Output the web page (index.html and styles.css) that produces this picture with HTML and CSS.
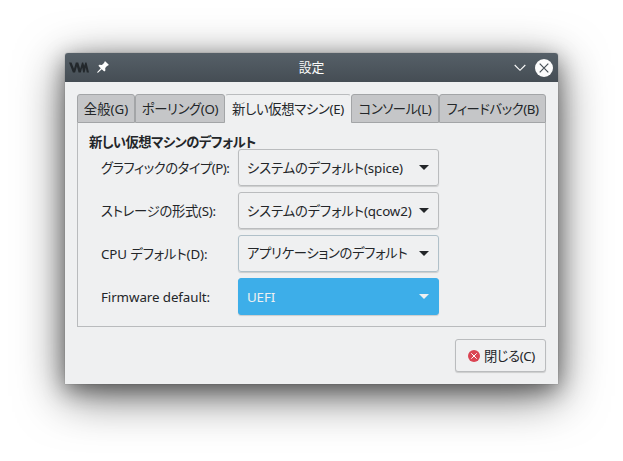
FILE: index.html
```html
<!DOCTYPE html>
<html lang="ja">
<head>
<meta charset="utf-8">
<title>設定</title>
<link rel="stylesheet" href="styles.css">
</head>
<body>
<main class="window">
  <header class="titlebar">
    <svg class="logo" width="20" height="11" viewBox="0 0 20 11"><path d="M0 .5h2.500L5 6.800 6.800.5h2.400l2 6.300L13 .5h1.200l1 3.300L16.300.5h1.200l2.500 10h-2.200L16.800 5.500l-1.200 5h-1.400L13.200 5.500l-1.400 5H9.600L7.900 4.500l-1.800 6H3.900z" fill="#23282c"/></svg>
    <svg class="pin" width="12" height="12" viewBox="0 0 12 12"><path d="M8.200.2 11.800 3.800l-.9 1-.7-.1-2 2.400.2 2.500-1.100 1L4.700 8.200 1 11.700H.3V11L3.800 7.300 1.400 4.800l1-1.100 2.500.2L7.300 1.800l-.1-.7z" fill="#fff"/></svg>
    <h1 class="title">設定</h1>
    <svg class="chevron" width="12" height="8" viewBox="0 0 12 8"><path d="M.7 1 6 6.300 11.300 1" fill="none" stroke="#fcfcfc" stroke-width="1.100"/></svg>
    <svg class="close" width="18" height="18" viewBox="0 0 18 18"><circle cx="9" cy="9" r="9" fill="#fcfcfc"/><path d="m4.700 4.700 8.600 8.600m0-8.600-8.600 8.600" stroke="#475057" stroke-width="1.200"/></svg>
  </header>
  <nav class="tabs">
    <div class="tab tab-general"><span>全般(G)</span></div>
    <div class="tab tab-polling"><span>ポーリング(O)</span></div>
    <div class="tab tab-newvm active"><span>新しい仮想マシン(E)</span></div>
    <div class="tab tab-console"><span>コンソール(L)</span></div>
    <div class="tab tab-feedback"><span>フィードバック(B)</span></div>
  </nav>
  <section class="panel">
    <h2 class="heading">新しい仮想マシンのデフォルト</h2>
    <div class="form">
      <label class="label label-graphics"><span>グラフィックのタイプ(P):</span></label>
      <div class="select"><span>システムのデフォルト(spice)</span><i class="arrow"></i></div>
      <label class="label label-storage"><span>ストレージの形式(S):</span></label>
      <div class="select"><span>システムのデフォルト(qcow2)</span><i class="arrow"></i></div>
      <label class="label label-cpu"><span>CPU デフォルト(D):</span></label>
      <div class="select focus"><span>アプリケーションのデフォルト</span><i class="arrow"></i></div>
      <label class="label label-firmware"><span>Firmware default:</span></label>
      <div class="select highlighted"><span>UEFI</span><i class="arrow"></i></div>
    </div>
  </section>
  <footer class="actions">
    <button class="button">
      <svg width="12" height="12" viewBox="0 0 12 12"><circle cx="6" cy="6" r="6" fill="#da4453"/><path d="m3.300 3.300 5.400 5.400m0-5.400-5.400 5.400" stroke="#fff" stroke-width="1"/></svg>
      <span>閉じる(C)</span>
    </button>
  </footer>
</main>
</body>
</html>
```
FILE: styles.css
```css
* { box-sizing: border-box; }
body {
  margin: 0;
  height: 461px;
  padding: 53px 65px 77px;
  overflow: hidden;
  background: #fff;
  color: #232629;
  font: 13.333px/20px "Noto Sans", "Noto Sans CJK JP", sans-serif;
  font-feature-settings: "palt";
}
.window {
  height: 331px;
  background: #eff0f1;
  border-radius: 3px 3px 0 0;
  box-shadow: 0 0 1px rgba(0,0,0,.5), 0 12px 48px rgba(0,0,0,.58), 0 6px 22px rgba(0,0,0,.4);
}
.titlebar {
  display: flex;
  align-items: center;
  height: 29px;
  padding: 0 5px 0 4px;
  border-radius: 3px 3px 0 0;
  background: linear-gradient(#566068, #454d54);
}
.pin {
  margin-left: 8px;
  margin-right: 1px;
  margin-bottom: 2px;
}
.title {
  flex: 1;
  margin: 0 1px 2px 0;
  color: #fcfcfc;
  font-size: 12.800px;
  font-weight: 400;
  text-align: center;
}
.close { margin-left: 9px; }
.tabs {
  display: flex;
  height: 29px;
  margin: 12px 12px 0;
}
.tab {
  display: flex;
  align-items: center;
  justify-content: center;
  border: 1px solid #a3a5a7;
  border-radius: 3px 3px 0 0;
  background: #c5c6c8;
  letter-spacing: -.45px;
  white-space: nowrap;
}
.tab-general { width: 58px; letter-spacing: 0; }
.tab-polling { width: 90px; letter-spacing: -.35px; }
.tab-newvm { width: 126px; letter-spacing: -.3px; }
.tab-console { width: 88px; }
.tab-feedback { width: 107px; }
.tab.active {
  border-color: #babcbe transparent transparent;
  background: #eff0f1;
}
.panel {
  height: 204px;
  margin: 0 12px;
  padding: 9px 11px 0;
  border: 1px solid #b9bbbd;
  border-top: 0;
}
.heading {
  height: 17px;
  margin: 0;
  font-size: 13.333px;
  font-weight: 700;
  line-height: 20px;
  letter-spacing: -.55px;
  white-space: nowrap;
}
.form {
  display: grid;
  grid-template-columns: 137px 201px;
  grid-auto-rows: 37px;
  row-gap: 6px;
  padding-left: 12px;
}
.label {
  display: flex;
  align-items: center;
  white-space: nowrap;
}
.label-graphics { letter-spacing: -.5px; }
.label-storage { letter-spacing: -.3px; }
.label-cpu { letter-spacing: -.1px; }
.label-firmware { letter-spacing: -.08px; }
.select {
  display: flex;
  align-items: center;
  justify-content: space-between;
  padding: 0 9px 0 8px;
  border: 1px solid #babcbe;
  border-radius: 3px;
  box-shadow: 0 1px 1px rgba(0,0,0,.15);
  letter-spacing: -.12px;
  white-space: nowrap;
}
.select.focus {
  border-color: #b0c0c9;
  letter-spacing: -.3px;
}
.select.focus span { margin-bottom: 2px; }
.select.highlighted {
  border-color: #3daee9;
  background: #3daee9;
  color: #eff0f1;
}
.arrow {
  border: 5px solid transparent;
  border-top-color: currentColor;
  border-bottom: 0;
}
.actions {
  display: flex;
  justify-content: flex-end;
  padding: 12px 12px 0;
}
.button {
  display: flex;
  align-items: center;
  gap: 4px;
  width: 91px;
  height: 33px;
  padding: 0 0 0 12px;
  border: 1px solid #babcbe;
  border-radius: 3px;
  background: #eff0f1;
  box-shadow: 0 1px 1px rgba(0,0,0,.15);
  color: inherit;
  font: inherit;
  font-feature-settings: inherit;
  letter-spacing: -.4px;
  white-space: nowrap;
}
```
